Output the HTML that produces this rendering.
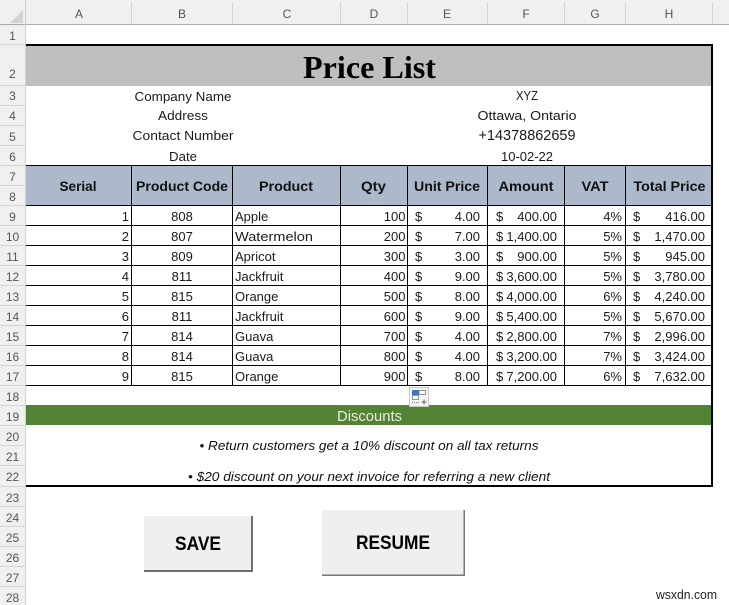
<!DOCTYPE html>
<html><head><meta charset="utf-8"><style>
html,body{margin:0;padding:0;background:#fff;width:729px;height:605px;overflow:hidden}
svg{display:block}
text{font-family:"Liberation Sans",sans-serif;fill:#111}
.d text{font-size:13px;fill:#1a1a1a}
.h text{font-size:13.5px;font-weight:bold;text-anchor:middle}
.c text{font-size:12px;fill:#555;text-anchor:middle}
.r text{font-size:12px;fill:#555;text-anchor:middle}
.m{text-anchor:middle}.e{text-anchor:end}
</style></head><body>
<svg width="729" height="605" viewBox="0 0 729 605" xmlns="http://www.w3.org/2000/svg">
<rect width="729" height="605" fill="#fff"/>
<rect width="729" height="24" fill="#f0f0f0"/>
<rect y="24" width="25" height="581" fill="#f0f0f0"/>
<rect x="0" y="24" width="729" height="1" fill="#ababab"/>
<rect x="25" y="0" width="1" height="605" fill="#d0d0d0"/>
<path d="M23 10V23H10Z" fill="#d2d2d2"/>
<g fill="#d4d4d4">
<rect x="131" y="2" width="1" height="22"/><rect x="232" y="2" width="1" height="22"/><rect x="340" y="2" width="1" height="22"/><rect x="407" y="2" width="1" height="22"/><rect x="487" y="2" width="1" height="22"/><rect x="564" y="2" width="1" height="22"/><rect x="625" y="2" width="1" height="22"/><rect x="712" y="2" width="1" height="22"/>
<rect y="44" width="25" height="1"/><rect y="85" width="25" height="1"/><rect y="105" width="25" height="1"/><rect y="125" width="25" height="1"/><rect y="145" width="25" height="1"/><rect y="165" width="25" height="1"/><rect y="185" width="25" height="1"/><rect y="205" width="25" height="1"/><rect y="225" width="25" height="1"/><rect y="245" width="25" height="1"/><rect y="265" width="25" height="1"/><rect y="285" width="25" height="1"/><rect y="305" width="25" height="1"/><rect y="325" width="25" height="1"/><rect y="345" width="25" height="1"/><rect y="365" width="25" height="1"/><rect y="385" width="25" height="1"/><rect y="405" width="25" height="1"/><rect y="425" width="25" height="1"/><rect y="445" width="25" height="1"/><rect y="465" width="25" height="1"/><rect y="486" width="25" height="1"/><rect y="506" width="25" height="1"/><rect y="526" width="25" height="1"/><rect y="546" width="25" height="1"/><rect y="566" width="25" height="1"/><rect y="586" width="25" height="1"/>
</g>
<g class="c"><text x="79" y="18">A</text><text x="182" y="18">B</text><text x="287" y="18">C</text><text x="374" y="18">D</text><text x="447" y="18">E</text><text x="526" y="18">F</text><text x="595" y="18">G</text><text x="669" y="18">H</text></g>
<g class="r"><text x="12.5" y="40">1</text><text x="12.5" y="78">2</text><text x="12.5" y="100">3</text><text x="12.5" y="120">4</text><text x="12.5" y="141">5</text><text x="12.5" y="161">6</text><text x="12.5" y="181">7</text><text x="12.5" y="201">8</text><text x="12.5" y="221">9</text><text x="12.5" y="241">10</text><text x="12.5" y="261">11</text><text x="12.5" y="281">12</text><text x="12.5" y="301">13</text><text x="12.5" y="321">14</text><text x="12.5" y="341">15</text><text x="12.5" y="361">16</text><text x="12.5" y="381">17</text><text x="12.5" y="401">18</text><text x="12.5" y="421">19</text><text x="12.5" y="441">20</text><text x="12.5" y="461">21</text><text x="12.5" y="481">22</text><text x="12.5" y="502">23</text><text x="12.5" y="522">24</text><text x="12.5" y="542">25</text><text x="12.5" y="562">26</text><text x="12.5" y="582">27</text><text x="12.5" y="602">28</text></g>

<rect x="26" y="46" width="685" height="40" fill="#bfbfbf"/>
<rect x="26" y="166" width="685" height="39" fill="#acb9ca"/>
<rect x="26" y="405" width="685" height="20" fill="#548235"/>

<g fill="#000">
<rect x="26" y="165" width="685" height="1"/><rect x="26" y="205" width="685" height="1"/><rect x="26" y="225" width="685" height="1"/><rect x="26" y="245" width="685" height="1"/><rect x="26" y="265" width="685" height="1"/><rect x="26" y="285" width="685" height="1"/><rect x="26" y="305" width="685" height="1"/><rect x="26" y="325" width="685" height="1"/><rect x="26" y="345" width="685" height="1"/><rect x="26" y="365" width="685" height="1"/><rect x="26" y="385" width="685" height="1"/>
<rect x="131" y="165" width="1" height="220"/><rect x="232" y="165" width="1" height="220"/><rect x="340" y="165" width="1" height="220"/><rect x="407" y="165" width="1" height="220"/><rect x="487" y="165" width="1" height="220"/><rect x="564" y="165" width="1" height="220"/><rect x="625" y="165" width="1" height="220"/>
<rect x="26" y="44" width="687" height="2"/><rect x="26" y="485" width="687" height="2"/><rect x="711" y="44" width="2" height="443"/>
</g>

<text x="369.5" y="78" class="m" textLength="133" lengthAdjust="spacingAndGlyphs" style="font-family:'Liberation Serif',serif;font-size:32px;font-weight:bold;fill:#000">Price List</text>

<g class="d">
<text x="183" y="101" class="m" textLength="97" lengthAdjust="spacingAndGlyphs">Company Name</text>
<text x="183" y="120" class="m" textLength="50" lengthAdjust="spacingAndGlyphs">Address</text>
<text x="183" y="140" class="m" textLength="101" lengthAdjust="spacingAndGlyphs">Contact Number</text>
<text x="183" y="161" class="m" textLength="28" lengthAdjust="spacingAndGlyphs">Date</text>
<text x="527" y="100" class="m" textLength="22" lengthAdjust="spacingAndGlyphs">XYZ</text>
<text x="527" y="120" class="m" textLength="99" lengthAdjust="spacingAndGlyphs">Ottawa, Ontario</text>
<text x="527" y="140" class="m" textLength="97" lengthAdjust="spacingAndGlyphs" style="font-size:14.5px">+14378862659</text>
<text x="527" y="161" class="m" textLength="52" lengthAdjust="spacingAndGlyphs">10-02-22</text>
</g>

<g class="h">
<text x="78" y="191" textLength="37" lengthAdjust="spacingAndGlyphs">Serial</text>
<text x="182" y="191" textLength="92" lengthAdjust="spacingAndGlyphs">Product Code</text>
<text x="286" y="191" textLength="54" lengthAdjust="spacingAndGlyphs">Product</text>
<text x="373.5" y="191" textLength="25" lengthAdjust="spacingAndGlyphs">Qty</text>
<text x="447" y="191" textLength="66" lengthAdjust="spacingAndGlyphs">Unit Price</text>
<text x="526" y="191" textLength="55" lengthAdjust="spacingAndGlyphs">Amount</text>
<text x="595" y="191" textLength="27" lengthAdjust="spacingAndGlyphs">VAT</text>
<text x="669.5" y="191" textLength="72" lengthAdjust="spacingAndGlyphs">Total Price</text>
</g>

<g class="d">
<text x="129" y="221" class="e">1</text><text x="182" y="221" class="m">808</text><text x="235" y="221">Apple</text><text x="405.5" y="221" class="e">100</text><text x="415" y="221">$</text><text x="480" y="221" class="e">4.00</text><text x="496" y="221">$</text><text x="557" y="221" class="e">400.00</text><text x="622" y="221" class="e">4%</text><text x="633" y="221">$</text><text x="705" y="221" class="e">416.00</text>
<text x="129" y="241" class="e">2</text><text x="182" y="241" class="m">807</text><text x="235" y="241" textLength="78" lengthAdjust="spacingAndGlyphs">Watermelon</text><text x="405.5" y="241" class="e">200</text><text x="415" y="241">$</text><text x="480" y="241" class="e">7.00</text><text x="496" y="241">$</text><text x="557" y="241" class="e">1,400.00</text><text x="622" y="241" class="e">5%</text><text x="633" y="241">$</text><text x="705" y="241" class="e">1,470.00</text>
<text x="129" y="261" class="e">3</text><text x="182" y="261" class="m">809</text><text x="235" y="261">Apricot</text><text x="405.5" y="261" class="e">300</text><text x="415" y="261">$</text><text x="480" y="261" class="e">3.00</text><text x="496" y="261">$</text><text x="557" y="261" class="e">900.00</text><text x="622" y="261" class="e">5%</text><text x="633" y="261">$</text><text x="705" y="261" class="e">945.00</text>
<text x="129" y="281" class="e">4</text><text x="182" y="281" class="m">811</text><text x="235" y="281">Jackfruit</text><text x="405.5" y="281" class="e">400</text><text x="415" y="281">$</text><text x="480" y="281" class="e">9.00</text><text x="496" y="281">$</text><text x="557" y="281" class="e">3,600.00</text><text x="622" y="281" class="e">5%</text><text x="633" y="281">$</text><text x="705" y="281" class="e">3,780.00</text>
<text x="129" y="301" class="e">5</text><text x="182" y="301" class="m">815</text><text x="235" y="301">Orange</text><text x="405.5" y="301" class="e">500</text><text x="415" y="301">$</text><text x="480" y="301" class="e">8.00</text><text x="496" y="301">$</text><text x="557" y="301" class="e">4,000.00</text><text x="622" y="301" class="e">6%</text><text x="633" y="301">$</text><text x="705" y="301" class="e">4,240.00</text>
<text x="129" y="321" class="e">6</text><text x="182" y="321" class="m">811</text><text x="235" y="321">Jackfruit</text><text x="405.5" y="321" class="e">600</text><text x="415" y="321">$</text><text x="480" y="321" class="e">9.00</text><text x="496" y="321">$</text><text x="557" y="321" class="e">5,400.00</text><text x="622" y="321" class="e">5%</text><text x="633" y="321">$</text><text x="705" y="321" class="e">5,670.00</text>
<text x="129" y="341" class="e">7</text><text x="182" y="341" class="m">814</text><text x="235" y="341">Guava</text><text x="405.5" y="341" class="e">700</text><text x="415" y="341">$</text><text x="480" y="341" class="e">4.00</text><text x="496" y="341">$</text><text x="557" y="341" class="e">2,800.00</text><text x="622" y="341" class="e">7%</text><text x="633" y="341">$</text><text x="705" y="341" class="e">2,996.00</text>
<text x="129" y="361" class="e">8</text><text x="182" y="361" class="m">814</text><text x="235" y="361">Guava</text><text x="405.5" y="361" class="e">800</text><text x="415" y="361">$</text><text x="480" y="361" class="e">4.00</text><text x="496" y="361">$</text><text x="557" y="361" class="e">3,200.00</text><text x="622" y="361" class="e">7%</text><text x="633" y="361">$</text><text x="705" y="361" class="e">3,424.00</text>
<text x="129" y="381" class="e">9</text><text x="182" y="381" class="m">815</text><text x="235" y="381">Orange</text><text x="405.5" y="381" class="e">900</text><text x="415" y="381">$</text><text x="480" y="381" class="e">8.00</text><text x="496" y="381">$</text><text x="557" y="381" class="e">7,200.00</text><text x="622" y="381" class="e">6%</text><text x="633" y="381">$</text><text x="705" y="381" class="e">7,632.00</text>
</g>

<text x="369.5" y="421" class="m" textLength="65" lengthAdjust="spacingAndGlyphs" style="font-size:15px;fill:#e8efe2">Discounts</text>
<text x="369" y="450" class="m" textLength="339" lengthAdjust="spacingAndGlyphs" style="font-size:13px;font-style:italic">• Return customers get a 10% discount on all tax returns</text>
<text x="369" y="481" class="m" textLength="362" lengthAdjust="spacingAndGlyphs" style="font-size:13px;font-style:italic">• $20 discount on your next invoice for referring a new client</text>

<rect x="409.5" y="387.5" width="19" height="19" fill="#f5f5f5" stroke="#c8c8c8"/>
<rect x="412" y="390" width="7" height="5" fill="#4472c4"/>
<rect x="419" y="390.5" width="6.5" height="4" fill="#fff" stroke="#777" stroke-width=".8"/>
<rect x="412.5" y="395.5" width="6" height="4" fill="#fff" stroke="#777" stroke-width=".8"/>
<path d="M412 402.5h8" stroke="#777" stroke-width="1" stroke-dasharray="1 1" fill="none"/>
<path d="M424 399.5v5M421.5 402h5" stroke="#666" stroke-width="1" fill="none"/>

<rect x="144" y="516" width="109" height="56" fill="#6f6f6f"/>
<rect x="144" y="516" width="107" height="54" fill="#efefef"/>
<rect x="322" y="510" width="143" height="66" fill="#777"/>
<rect x="322" y="510" width="141.500" height="64.500" fill="#efefef"/>
<text x="198" y="550" class="m" textLength="46" lengthAdjust="spacingAndGlyphs" style="font-size:19px;font-weight:bold;fill:#000">SAVE</text>
<text x="393" y="549" class="m" textLength="74" lengthAdjust="spacingAndGlyphs" style="font-size:19px;font-weight:bold;fill:#000">RESUME</text>

<text x="656" y="599" textLength="61" lengthAdjust="spacingAndGlyphs" style="font-size:13px;fill:#222">wsxdn.com</text>
</svg>
</body></html>
